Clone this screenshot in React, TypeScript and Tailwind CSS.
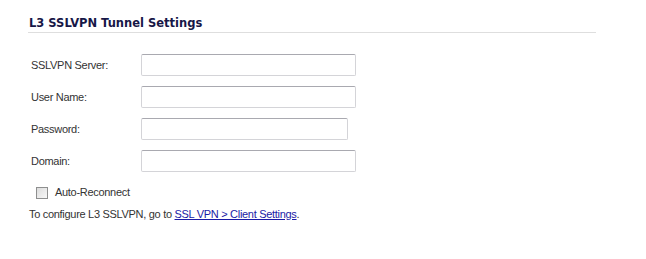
import React from "react";

const body = { fontFamily: '"Liberation Sans", Arial, sans-serif' };

function Row({ label, w }: { label: string; w: string }) {
  return (
    <div className="flex h-[22px] items-center">
      <div className="w-[113px] pl-[3px] text-[11px] tracking-[-0.3px] text-[#333]">{label}</div>
      <div
        className={`h-[22px] ${w} rounded-[2px] border border-[#d4d4d8] border-t-[#a9a9b0] bg-white`}
      />
    </div>
  );
}

export default function App() {
  return (
    <div className="h-[259px] w-[646px] bg-white" style={body}>
      <div className="pl-[28px] pt-[17px]">
        <div className="w-[568px] border-b border-[#dedede] pb-[3px]">
          <div
            className="pl-[1px] text-[11.5px] font-bold leading-[12px] text-[#171747]"
            style={{ fontFamily: '"DejaVu Sans", Verdana, sans-serif' }}
          >
            L3 SSLVPN Tunnel Settings
          </div>
        </div>
        <div className="mt-[21px] flex flex-col gap-[10px]">
          <Row label="SSLVPN Server:" w="w-[215px]" />
          <Row label="User Name:" w="w-[215px]" />
          <Row label="Password:" w="w-[207px]" />
          <Row label="Domain:" w="w-[215px]" />
        </div>
        <div className="mt-[14px] flex h-[13px] items-center pl-[8px]">
          <div className="h-[12px] w-[12px] border border-[#8e8f8f] bg-gradient-to-br from-[#dcdcdc] to-[#f8f8f8]" />
          <span className="ml-[7px] text-[11px] tracking-[-0.3px] text-[#333]">Auto-Reconnect</span>
        </div>
        <div className="mt-[8px] pl-[1px] text-[11px] leading-[14px] tracking-[-0.3px] text-[#333]">
          To configure L3 SSLVPN, go to{" "}
          <a href="#" className="text-[#1a1aa6] underline">
            SSL VPN &gt; Client Settings
          </a>
          .
        </div>
      </div>
    </div>
  );
}
